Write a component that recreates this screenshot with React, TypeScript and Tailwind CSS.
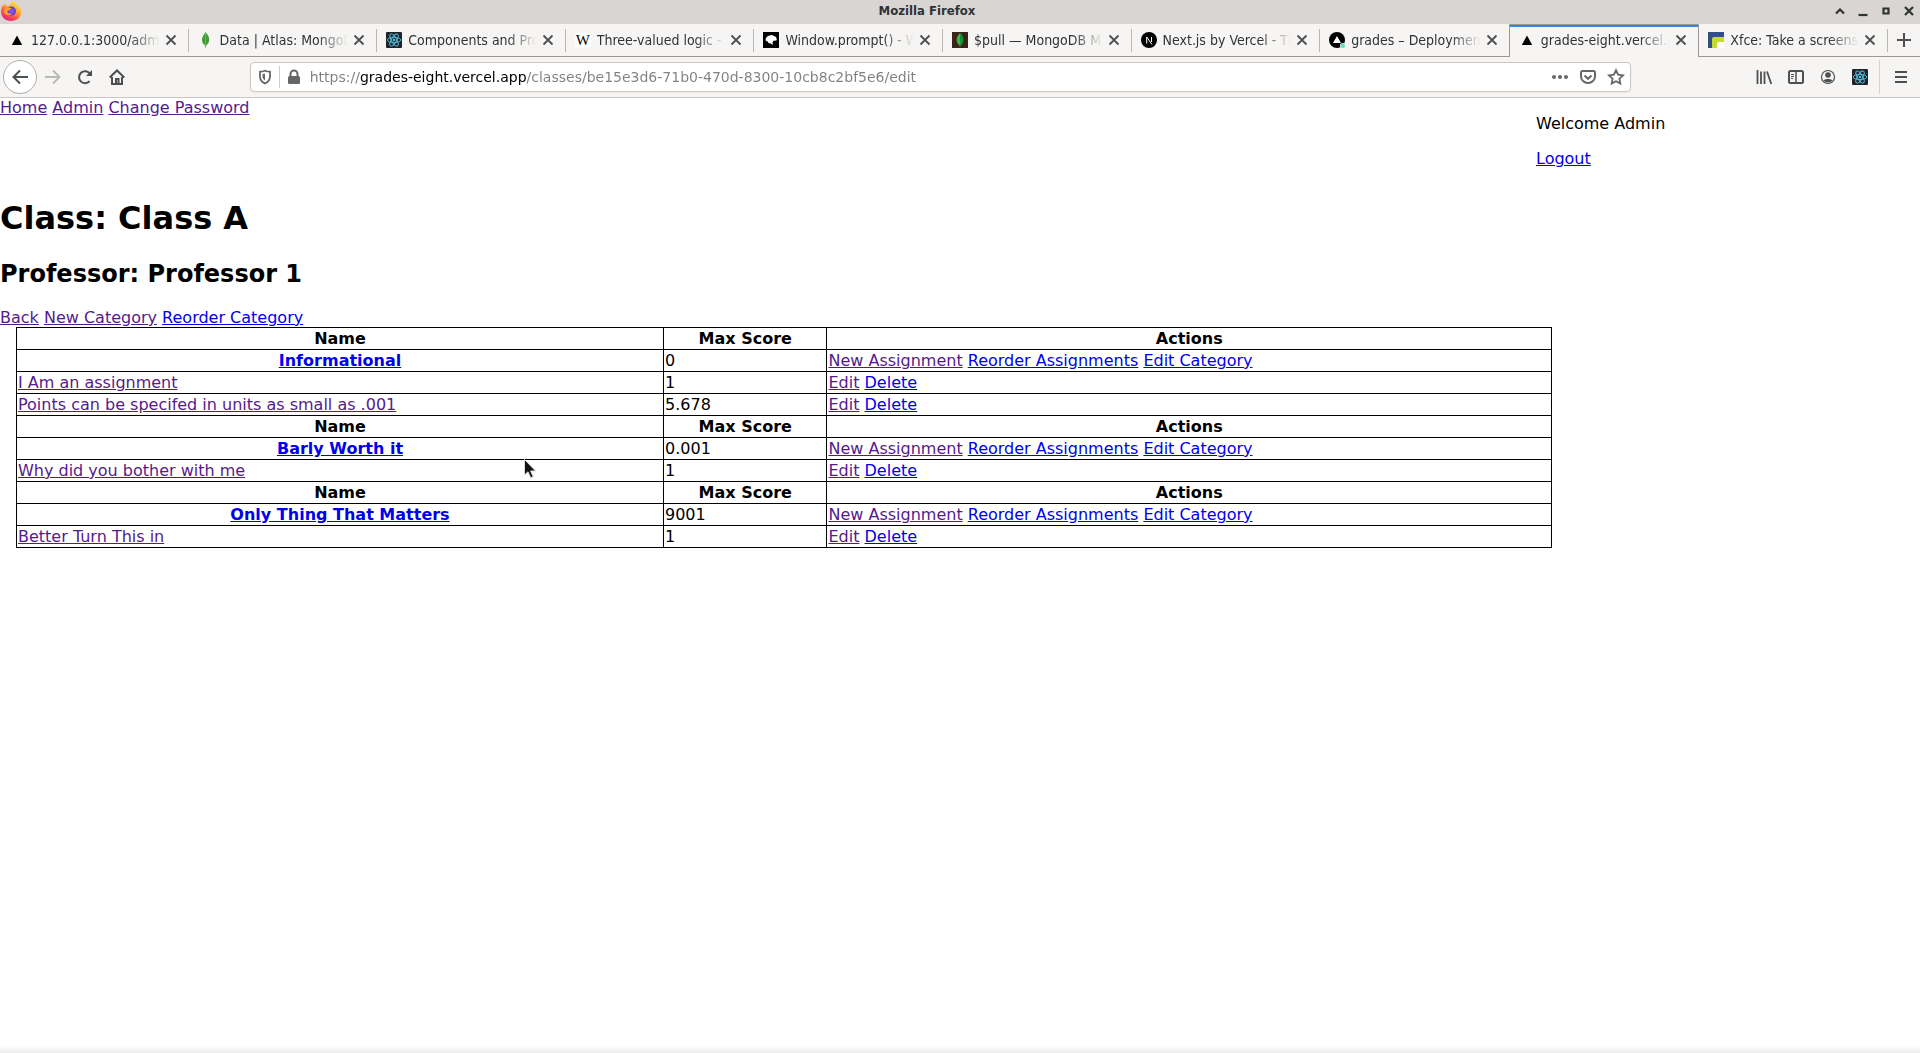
import type { ReactNode } from 'react';

function VercelMark() {
  return (
    <svg viewBox="0 0 16 16" className="size-4 shrink-0">
      <path d="M8 3.5 13.2 13H2.8z" fill="#000" />
    </svg>
  );
}

function MongoLeaf() {
  return (
    <svg viewBox="0 0 16 16" className="size-4 shrink-0">
      <path d="M7.5 0C9 2 11.2 4.2 11.2 7.6c0 3.2-1.8 5-3 6L8 15.600h-.8L7 13.600C5.600 12.500 4 10.700 4 7.800 4 4.300 6.300 2.300 7.500 0z" fill="#3f9c35" />
      <path d="M7.600 1v13.500" stroke="#7cc26a" strokeWidth=".8" />
    </svg>
  );
}

function ReactMark() {
  return (
    <svg viewBox="0 0 16 16" className="size-4 shrink-0">
      <rect width="16" height="16" rx="1" fill="#20232a" />
      <g fill="none" stroke="#53c1de" strokeWidth=".9">
        <ellipse cx="8" cy="8" rx="6.8" ry="2.600" />
        <ellipse cx="8" cy="8" rx="6.8" ry="2.600" transform="rotate(60 8 8)" />
        <ellipse cx="8" cy="8" rx="6.8" ry="2.600" transform="rotate(120 8 8)" />
      </g>
      <circle cx="8" cy="8" r="1.300" fill="#53c1de" />
    </svg>
  );
}

function WikiMark() {
  return (
    <span className="flex size-4 shrink-0 items-center justify-center rounded-sm bg-white font-['Liberation_Serif'] text-[15px] leading-4 text-black">
      W
    </span>
  );
}

function MdnMark() {
  return (
    <svg viewBox="0 0 16 16" className="size-4 shrink-0">
      <rect width="16" height="16" fill="#000" />
      <path d="M2.500 7.500C3 5 5 3.500 7.500 3.300L9.500 3l1 1 2.300.8 1 2.200-.3 1.500-3 .3-1 1.500.3 2.700-2-1.500-2.300-.5-.7-1.500L3 9z" fill="#fff" />
    </svg>
  );
}

function MongoDocsMark() {
  return (
    <svg viewBox="0 0 16 16" className="size-4 shrink-0">
      <rect width="16" height="16" fill="#3a2317" />
      <path d="M8 1c1.800 2 3.300 4 3.300 6.700 0 2.800-1.500 4.600-3 5.800V15h-.7v-1.500c-1.500-1.200-3-3-3-5.800C4.600 5 6.300 3 8 1z" fill="#3fae4a" />
      <path d="M8 1c1.800 2 3.300 4 3.300 6.700 0 2.800-1.500 4.600-3 5.800z" fill="#12913c" />
    </svg>
  );
}

function NextMark() {
  return (
    <svg viewBox="0 0 16 16" className="size-4 shrink-0">
      <circle cx="8" cy="8" r="8" fill="#000" />
      <path d="M5.700 11.500V5l5.300 7.500M10.500 5v5" fill="none" stroke="#fff" strokeWidth="1" />
    </svg>
  );
}

function DeployMark() {
  return (
    <svg viewBox="0 0 16 16" className="size-4 shrink-0">
      <circle cx="8" cy="8" r="8" fill="#000" />
      <path d="M8 4l4 7H4z" fill="#fff" />
      <circle cx="13.800" cy="13.800" r="2.800" fill="#f6f5f4" />
      <circle cx="13.800" cy="13.800" r="2.200" fill="#50e3c2" />
    </svg>
  );
}

function BlogMark() {
  return (
    <svg viewBox="0 0 16 16" className="size-4 shrink-0">
      <rect width="16" height="16" fill="#33517e" />
      <path d="M4 16V7q0-2 2-2h10v11z" fill="#c4dc30" />
      <path d="M9 16v-4q0-2 2-2h5v6z" fill="#fff" />
    </svg>
  );
}

function FirefoxLogo() {
  return (
    <svg viewBox="0 0 22 22" className="size-[22px] shrink-0">
      <defs>
        <linearGradient id="flame" x1=".8" y1="0" x2=".2" y2="1">
          <stop offset="0" stopColor="#fff44f" />
          <stop offset=".4" stopColor="#ffa436" />
          <stop offset=".7" stopColor="#ff4f4a" />
          <stop offset="1" stopColor="#e5178f" />
        </linearGradient>
        <radialGradient id="globe">
          <stop offset="0" stopColor="#9059ff" />
          <stop offset="1" stopColor="#5b3fc4" />
        </radialGradient>
      </defs>
      <path d="M13.500.5c1 1 2 2 2.400 3.500 3 1.500 5.400 4.500 5.400 8 0 5-4.300 9-10.200 9C5 21 1 17 1 11.500 1 9 1.600 6.700 3 4.700l.5 1.600L5 3l1 3 3-.2c1.500-2 2.500-4 4.500-5.300z" fill="url(#flame)" />
      <circle cx="11.500" cy="11" r="4.500" fill="url(#globe)" />
      <path d="M5 8.500c2-1.800 3.500-.5 5.500-.5 1.500 0 1 1-.5 1.600-1.200.5-1.700 1.400-3 1.800 1 1.600 2.500 2.600 5 2.200-2 2.500-6.500 2-8-1.600z" fill="#ffa02e" />
    </svg>
  );
}

type Tab = { title: string; icon: ReactNode; active?: boolean; beforeActive?: boolean };

const tabs: Tab[] = [
  { title: '127.0.0.1:3000/admin', icon: <VercelMark /> },
  { title: 'Data | Atlas: MongoDB', icon: <MongoLeaf /> },
  { title: 'Components and Props', icon: <ReactMark /> },
  { title: 'Three-valued logic - W', icon: <WikiMark /> },
  { title: 'Window.prompt() - Web', icon: <MdnMark /> },
  { title: '$pull — MongoDB Man', icon: <MongoDocsMark /> },
  { title: 'Next.js by Vercel - The', icon: <NextMark /> },
  { title: 'grades – Deployment', icon: <DeployMark />, beforeActive: true },
  { title: 'grades-eight.vercel.app', icon: <VercelMark />, active: true },
  { title: 'Xfce: Take a screensh', icon: <BlogMark /> },
];

function TabItem({ title, icon, active, beforeActive }: Tab) {
  return (
    <div
      role="tab"
      aria-selected={!!active}
      className={
        active
          ? 'flex min-w-0 flex-1 border-x border-t border-[#9a9996] bg-[#f6f5f4]'
          : 'flex min-w-0 flex-1 border-b border-[#9a9996]'
      }
    >
      <div
        className={
          active
            ? 'flex min-w-0 flex-1 items-center border-t-2 border-[#3584e4] pr-[11px] pb-1 pl-[9px]'
            : 'flex min-w-0 flex-1 items-center pr-[11px] pl-[9px]'
        }
      >
        {icon}
        <span className="ml-[6px] min-w-0 flex-1 overflow-hidden whitespace-nowrap [mask-image:linear-gradient(to_left,transparent,black_30px)]">
          {title}
        </span>
        <button aria-label={`Close ${title}`} className="ml-[5px] flex size-3 shrink-0 items-center justify-center">
          <svg viewBox="0 0 12 12" className="size-3">
            <path d="M1.500 1.500l9 9M10.500 1.500l-9 9" stroke="#4b5052" strokeWidth="1.800" />
          </svg>
        </button>
      </div>
      {!active && !beforeActive && <div className="mt-[5px] mb-1 w-px bg-[#b8b6b3]" />}
    </div>
  );
}

function Tool({ label, children, className = 'w-8' }: { label: string; children: ReactNode; className?: string }) {
  return (
    <button aria-label={label} className={`flex h-8 shrink-0 items-center justify-center ${className}`}>
      <svg viewBox="0 0 16 16" className="size-4 overflow-visible" fill="none" stroke="#4b5052" strokeWidth="2">
        {children}
      </svg>
    </button>
  );
}

function Browser() {
  return (
    <header className="font-['DejaVu_Sans_Condensed','DejaVu_Sans',sans-serif] text-[14px] leading-5 text-[#2e3436]">
      <div className="flex h-6 items-center bg-[#d9d5d2] pb-[3px]">
        <FirefoxLogo />
        <div className="flex-1 text-center text-[13px] font-bold">Mozilla Firefox</div>
        <div className="flex items-center justify-end gap-[7px] pr-[3px]">
          {[
            ['Roll up', 'M4 10.500l4-4 4 4'],
            ['Minimize', 'M3.500 12h9'],
            ['Maximize', 'M5.500 5.500h5v5h-5z'],
            ['Close', 'M4 4l8 8M12 4l-8 8'],
          ].map(([label, d]) => (
            <button key={label} aria-label={label}>
              <svg viewBox="0 0 16 16" className="size-4" fill="none" stroke="#2e3436" strokeWidth="2.200">
                <path d={d} />
              </svg>
            </button>
          ))}
        </div>
      </div>

      <div className="flex h-[33px] bg-[#f6f5f4]">
        <div role="tablist" className="flex min-w-0 flex-1">
          {tabs.map((tab) => (
            <TabItem key={tab.title} {...tab} />
          ))}
        </div>
        <button aria-label="New tab" className="flex w-8 items-center justify-center border-b border-[#9a9996]">
          <svg viewBox="0 0 14 14" className="size-[14px]">
            <path d="M7 0v14M0 7h14" stroke="#4b5052" strokeWidth="2" />
          </svg>
        </button>
      </div>

      <div className="flex h-[41px] items-center border-b border-[#cdc7c2] bg-[#f6f5f4] px-[3px]">
        <button aria-label="Back" className="flex size-[34px] shrink-0 items-center justify-center rounded-full border border-[#b0aeab] bg-white">
          <svg viewBox="0 0 16 16" className="size-4" fill="none" stroke="#4b5052" strokeWidth="2">
            <path d="M16 8H1.500M8 1.500L1.500 8 8 14.500" />
          </svg>
        </button>
        <Tool label="Forward">
          <path d="M0 8h14.500M8 1.500L14.500 8 8 14.500" stroke="#b9b9b8" />
        </Tool>
        <Tool label="Reload">
          <path d="M12.600 12.200A6 6 0 1 1 13 4.800" />
          <path d="M15 1v6H9z" fill="#4b5052" stroke="none" />
        </Tool>
        <Tool label="Home">
          <path d="M.7 8.500L8 1.500l7.300 7M3 8v7h10V8" />
          <path d="M7 14v-4h2.500v4" />
        </Tool>
        <div className="w-[6.1%] shrink-0" />
        <div className="flex h-[30px] min-w-0 flex-1 items-center rounded border border-[#cdc7c2] bg-white shadow-xs">
          <Tool label="Tracking protection" className="w-7">
            <path d="M8 1.700c2 1 3.800 1 5 1v4.500c0 3.500-2 6-5 7.300-3-1.300-5-3.800-5-7.300V2.700c1.200 0 3 0 5-1z" stroke="#666" strokeWidth="1.800" />
            <path d="M8 4.500v7C6.200 10.300 5.500 9 5.500 7V5z" fill="#666" stroke="none" />
          </Tool>
          <div className="h-[22px] w-px bg-[#d0cecb]" />
          <Tool label="Site information" className="w-7">
            <rect x="2" y="7" width="12" height="8" rx="1.500" fill="#666" stroke="none" />
            <path d="M4.500 8V5a3.500 3.500 0 0 1 7 0v3" stroke="#666" />
          </Tool>
          <input
            aria-label="Address"
            defaultValue="https://grades-eight.vercel.app/classes/be15e3d6-71b0-470d-8300-10cb8c2bf5e6/edit"
            className="ml-[2px] min-w-0 flex-1 bg-[linear-gradient(to_right,#808080_50px,#000_50px,#000_216px,#808080_216px)] bg-clip-text font-['DejaVu_Sans',sans-serif] text-[14px] text-transparent outline-none"
          />
          <Tool label="Page actions" className="w-7">
            <g fill="#666" stroke="none">
              <circle cx="2" cy="8" r="2" />
              <circle cx="8" cy="8" r="2" />
              <circle cx="14" cy="8" r="2" />
            </g>
          </Tool>
          <Tool label="Save to Pocket" className="w-7">
            <path d="M2.500 2h11q1.500 0 1.500 1.500V7.500a7 6.500 0 0 1-14 0V3.500Q1 2 2.500 2z" stroke="#666" />
            <path d="M4.500 6.500L8 9.800l3.500-3.300" stroke="#666" />
          </Tool>
          <Tool label="Bookmark" className="w-7">
            <path d="M8 1.200l2.100 4.500 4.900.6-3.600 3.400.9 4.900L8 12.200l-4.300 2.400.9-4.900L1 6.300l4.900-.6z" stroke="#666" strokeWidth="1.800" />
          </Tool>
        </div>
        <div className="w-[6.1%] shrink-0" />
        <Tool label="Library">
          <path d="M1.500 1v14M5 2.500V15M8.500 2.500V15M11 2.500L15.300 15" strokeWidth="1.800" />
        </Tool>
        <Tool label="Sidebars">
          <rect x="1" y="2" width="14" height="12" rx="1.500" />
          <path d="M8 2v12" strokeWidth="1.500" />
          <path d="M3 5.500h3M3 7.500h3M3 9.500h2" strokeWidth="1" />
        </Tool>
        <Tool label="Account">
          <circle cx="8" cy="8" r="6.500" strokeWidth="1.200" />
          <circle cx="8" cy="6" r="2.800" fill="#4b5052" stroke="none" />
          <path d="M3.600 11.500c1-2 7.800-2 8.800 0C10.500 14 5.500 14 3.600 11.500z" fill="#4b5052" stroke="none" />
        </Tool>
        <button aria-label="React Developer Tools" className="flex size-8 shrink-0 items-center justify-center">
          <ReactMark />
        </button>
        <div className="ml-[3px] h-[34px] w-px bg-[#d5d2cf]" />
        <Tool label="Menu" className="ml-[5px] w-8">
          <path d="M2 3h12M2 8h12M2 13h12" />
        </Tool>
      </div>
    </header>
  );
}

function Link({ visited, children }: { visited?: boolean; children: ReactNode }) {
  return (
    <a href="#" className={visited ? 'text-[#551a8b] underline' : 'text-[#0000ee] underline'}>
      {children}
    </a>
  );
}

const categories = [
  {
    name: 'Informational',
    max: '0',
    assignments: [
      ['I Am an assignment', '1'],
      ['Points can be specifed in units as small as .001', '5.678'],
    ],
  },
  { name: 'Barly Worth it', max: '0.001', assignments: [['Why did you bother with me', '1']] },
  { name: 'Only Thing That Matters', max: '9001', assignments: [['Better Turn This in', '1']] },
];

const cell = 'border border-black p-px text-left';
const head = 'border border-black p-px text-center font-bold';

function CategoryRows({ category }: { category: (typeof categories)[number] }) {
  return (
    <tbody>
      <tr>
        <th className={head}>Name</th>
        <th className={head}>Max Score</th>
        <th className={head}>Actions</th>
      </tr>
      <tr>
        <th className={head}>
          <Link>{category.name}</Link>
        </th>
        <td className={cell}>{category.max}</td>
        <td className={cell}>
          <Link visited>New Assignment</Link> <Link>Reorder Assignments</Link> <Link>Edit Category</Link>
        </td>
      </tr>
      {category.assignments.map(([name, max]) => (
        <tr key={name}>
          <td className={cell}>
            <Link visited>{name}</Link>
          </td>
          <td className={cell}>{max}</td>
          <td className={cell}>
            <Link visited>Edit</Link> <Link>Delete</Link>
          </td>
        </tr>
      ))}
    </tbody>
  );
}

export default function App() {
  return (
    <div className="relative flex min-h-screen flex-col bg-white">
      <Browser />
      <main className="flex-1 font-['DejaVu_Sans',sans-serif] text-[16px] leading-[19px] text-black">
        <div className="flex">
          <nav className="w-4/5">
            <Link visited>Home</Link> <Link visited>Admin</Link> <Link visited>Change Password</Link>
          </nav>
          <div className="flex flex-col gap-4 py-4">
            <p>Welcome Admin</p>
            <p>
              <Link>Logout</Link>
            </p>
          </div>
        </div>
        <h1 className="mt-4 text-[32px] leading-[37px] font-bold">Class: Class A</h1>
        <h2 className="mt-[23px] mb-5 text-[24px] leading-[28px] font-bold">Professor: Professor 1</h2>
        <div>
          <Link visited>Back</Link> <Link visited>New Category</Link> <Link>Reorder Category</Link>
        </div>
        <table className="ml-4 w-4/5 table-fixed border-collapse">
          <colgroup>
            <col className="w-[42.15%]" />
            <col className="w-[10.65%]" />
            <col />
          </colgroup>
          {categories.map((category) => (
            <CategoryRows key={category.name} category={category} />
          ))}
        </table>
      </main>
      <div className="h-2 bg-linear-to-b from-white to-[#ececec]" />
      <svg viewBox="0 0 13 20" className="pointer-events-none absolute top-[459px] left-[524px] h-5 w-[13px]">
        <path d="M.5.5v15.500l3.500-3.200 2.700 6 2.500-1.200-2.600-5.600h5z" fill="#111" stroke="#ddd" strokeWidth="1" />
      </svg>
    </div>
  );
}
